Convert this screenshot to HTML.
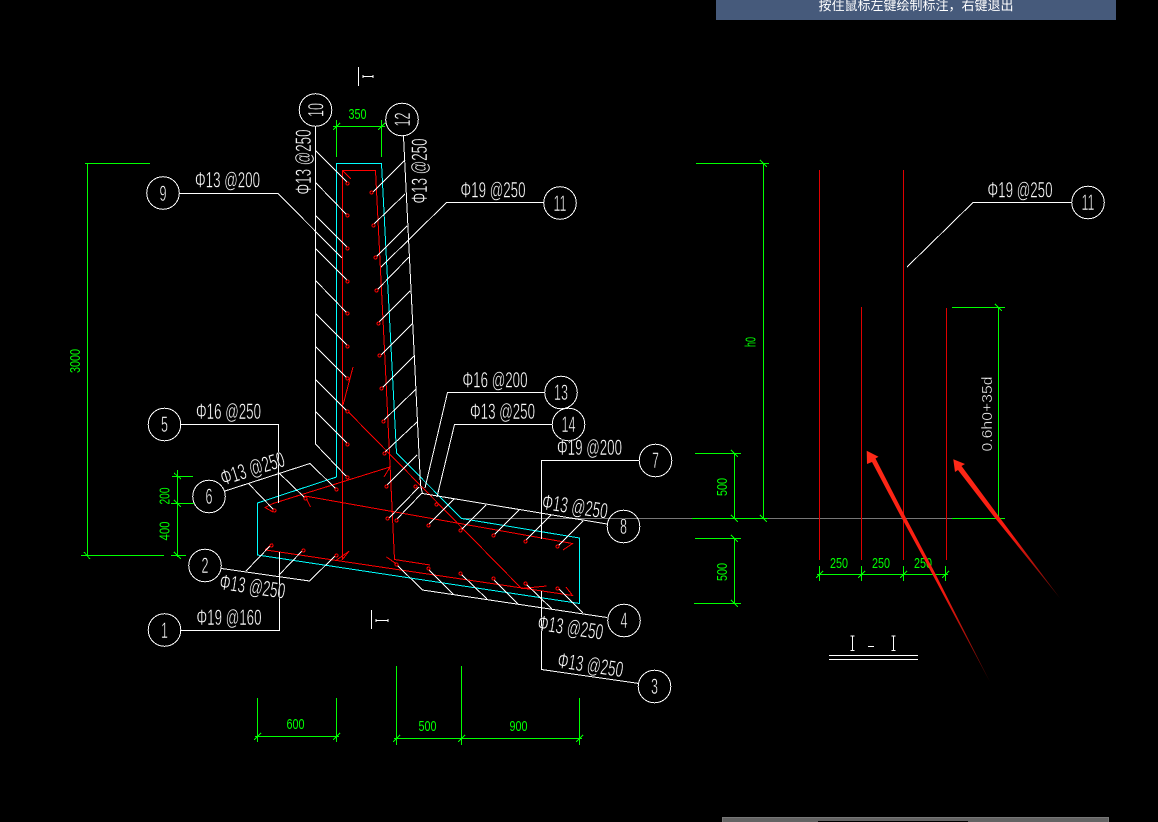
<!DOCTYPE html>
<html><head><meta charset="utf-8"><style>
html,body{margin:0;padding:0;background:#000;width:1158px;height:822px;overflow:hidden}
svg{position:absolute;left:0;top:0}
#b{position:absolute;left:716px;top:0;width:400px;height:20px;background:#465a7b;color:#fff;font:13px/13px "WenQuanYi Zen Hei","Noto Sans CJK SC",sans-serif;text-align:center}
#b span{position:relative;top:-2px}
#s{position:absolute;left:722px;top:817px;width:387px;height:5px;background:#636363;box-sizing:border-box;border:1px solid #777;border-bottom:0}
#k{position:absolute;left:818px;top:821px;width:150px;height:1px;background:#000}
.l{fill:none;shape-rendering:crispEdges;stroke-width:1}
.w{stroke:#fff}.g{stroke:#00ff00}.r{stroke:#ff0000}.c{stroke:#00ffff}
.d{fill:#000;stroke:#ff0000;stroke-width:1;shape-rendering:crispEdges}
text{font-family:"Liberation Sans",sans-serif;text-anchor:middle}
.t{fill:#fff;font-size:22px;stroke:#000;stroke-width:.45px}
.n{fill:#fff;font-size:22px;stroke:#000;stroke-width:.5px}
.m{fill:#00ff00;font-size:15px}
</style></head><body>
<svg width="1158" height="822" viewBox="0 0 1158 822">
<defs>
<linearGradient id="a1" gradientUnits="userSpaceOnUse" x1="867" y1="451" x2="990" y2="682"><stop offset="0" stop-color="#ff2a18"/><stop offset=".6" stop-color="#f5190f"/><stop offset="1" stop-color="#5a0804"/></linearGradient>
<linearGradient id="a2" gradientUnits="userSpaceOnUse" x1="953" y1="459" x2="1060" y2="598"><stop offset="0" stop-color="#ff2a18"/><stop offset=".55" stop-color="#f5190f"/><stop offset="1" stop-color="#5a0804"/></linearGradient>
</defs>

<!-- gray datum -->
<path class="l" stroke="#777" d="M462 518.5H692M766 518.5H952"/>

<!-- cyan outline -->
<path class="l c" d="M336.5 477V163.5H381.5L396.5 453L461.5 518.5L579.5 538V603.5L257.5 555V503L336.5 477"/>

<!-- red bars wall -->
<path class="l r" d="M342.5 560V170.5H375.5L385.5 370L394.5 559.5L430 565"/>
<path class="l r" d="M342.5 170.5L351 179M343 405L353 367M266 550L572.5 595.5L566 587M265 550L272.5 543.5"/>
<path class="l r" d="M273 503.5L390 467L384 477M273 503.5L265 507.5L273 512"/>
<path class="l r" d="M305 496L572.5 543.5L563 550M305 496L310.5 507"/>
<path class="l r" d="M347 410.5L521.5 588.5L546.5 586M336.5 560L348 552M342 560L349 551M386.5 557L396.5 564"/>

<!-- white outer -->
<path class="l w" d="M315.5 126V444L346 476"/>
<path class="l w" d="M403.5 136L404.5 157L415 370L420.5 485L422.5 493.5L607 524"/>
<path class="l w" d="M396 564L422.5 590L607 617.5"/>

<!-- left hatches -->
<path class="l w" d="M316 151L348 183M316 183L348 216M316 216L348 248M316 249L348 281M316 281L348 314M316 314L348 346M316 347L348 379M316 380L347 411M316 412L348 444"/>
<!-- right hatches -->
<path class="l w" d="M372 193L405 160M373 225L405 194M375 258L407 226M377 290L409 257M378 323L410 291M380 356L412 324M382 388L414 356M383 421L416 389M384 453L417 422M386 486L417 455M388 519L419 487M396 520L422 493"/>
<!-- base hatches top -->
<path class="l w" d="M428 525L454 499M461 530L486 505M493 536L519 510M525 541L551 515M558 546L583 521"/>
<!-- base hatches bottom -->
<path class="l w" d="M428 569L454 595M461 574L487 599M493 579L519 605M525 583L552 609M558 588L583 613"/>
<!-- left toe hatches -->
<path class="l w" d="M248 483L274 510M278 472L305 498M246 571L271 545M279 575L303 550"/>

<!-- leaders -->
<path class="l w" d="M179 193.5H278L342 258M446.5 202.5H544M446.5 202.5L381 267"/>
<path class="l w" d="M180 424.5H278.5V503M225 491L310 463.5L336 489M221.5 568.5L309.5 581L336 555M180 630.5H279.5V552"/>
<path class="l w" d="M545 392.5H447.5L425 488M552 424.5H454.5L437 497M639 460.5H541.5V539M639 683.5L541.5 669.5V591"/>
<path class="l w" d="M973 202.5H1071M973 202.5L907 267"/>

<!-- rebar dots -->
<g class="d">
<circle cx="347.5" cy="183.5" r="1.5"/><circle cx="347.5" cy="215.5" r="1.5"/><circle cx="347.5" cy="248.5" r="1.5"/><circle cx="347.5" cy="281.5" r="1.5"/><circle cx="347.5" cy="313.5" r="1.5"/><circle cx="347.5" cy="346.5" r="1.5"/><circle cx="347.5" cy="378.5" r="1.5"/><circle cx="347.5" cy="411.5" r="1.5"/><circle cx="347.5" cy="444.5" r="1.5"/><circle cx="347.5" cy="477.5" r="1.5"/>
<circle cx="371.5" cy="192.5" r="1.5"/><circle cx="373.5" cy="225.5" r="1.5"/><circle cx="375.5" cy="257.5" r="1.5"/><circle cx="376.5" cy="290.5" r="1.5"/><circle cx="378.5" cy="323.5" r="1.5"/><circle cx="379.5" cy="355.5" r="1.5"/><circle cx="381.5" cy="388.5" r="1.5"/><circle cx="383.5" cy="421.5" r="1.5"/><circle cx="384.5" cy="453.5" r="1.5"/><circle cx="386.5" cy="486.5" r="1.5"/><circle cx="387.5" cy="518.5" r="1.5"/><circle cx="396.5" cy="520.5" r="1.5"/>
<circle cx="415.5" cy="486.5" r="1.5"/><circle cx="436.5" cy="504.5" r="1.5"/>
<circle cx="428.5" cy="525.5" r="1.5"/><circle cx="460.5" cy="530.5" r="1.5"/><circle cx="493.5" cy="535.5" r="1.5"/><circle cx="525.5" cy="541.5" r="1.5"/><circle cx="557.5" cy="546.5" r="1.5"/>
<circle cx="396.5" cy="564.5" r="1.5"/><circle cx="428.5" cy="568.5" r="1.5"/><circle cx="460.5" cy="573.5" r="1.5"/><circle cx="493.5" cy="578.5" r="1.5"/><circle cx="525.5" cy="583.5" r="1.5"/><circle cx="557.5" cy="588.5" r="1.5"/>
<circle cx="274.5" cy="510.5" r="1.5"/><circle cx="305.5" cy="498.5" r="1.5"/><circle cx="336.5" cy="489.5" r="1.5"/>
<circle cx="271.5" cy="545.5" r="1.5"/><circle cx="303.5" cy="550.5" r="1.5"/><circle cx="336.5" cy="555.5" r="1.5"/>
</g>

<!-- circles -->
<g class="l w">
<circle cx="315.5" cy="110" r="16.3"/><circle cx="402" cy="119.5" r="16.3"/><circle cx="163" cy="193" r="16.3"/><circle cx="560" cy="203" r="16.3"/>
<circle cx="164.5" cy="424.5" r="16.3"/><circle cx="209" cy="496.5" r="16.3"/><circle cx="205" cy="565.5" r="16.3"/><circle cx="164.5" cy="630" r="16.3"/>
<circle cx="561" cy="392.5" r="16.3"/><circle cx="568.5" cy="424.5" r="16.3"/><circle cx="655.5" cy="460.5" r="16.3"/><circle cx="623.5" cy="526.5" r="16.3"/><circle cx="624" cy="620.5" r="16.3"/><circle cx="654.5" cy="686.5" r="16.3"/><circle cx="1088" cy="202.5" r="16.3"/>
</g>

<!-- green dims -->
<path class="l g" d="M85 163.5H150M87.5 163.5V555.5M81 555.5H164M177.5 470V557M172 476.5H193M171 503.5H194M171 555.5H186"/>
<path class="l g" d="M336.5 120V157M381.5 120V157M333 126.5H385"/>
<path class="l g" d="M257.5 698V742M336.5 698V742M255 736.5H339M396.5 666V745M461.5 666V745M579.5 698V745M394 738.5H582"/>
<path class="l g" d="M696 163.5H769M763.5 163.5V518.5M952 307.5H1005M998.5 307.5V518.5M952 518.5H1005"/>
<path class="l g" d="M695 453.5H741M734.5 453.5V518.5M692 518.5H768M695 538.5H741M734.5 538.5V603.5M694 603.5H741"/>
<path class="l g" d="M819.5 566V581M861.5 566V581M903.5 566V581M945.5 566V581M817 574.5H948"/>
<path class="l g" d="M84 552L90 559M174 473L181 479M174 500L181 507M174 552L181 559M333 130L340 123M378 130L385 123M254 740L261 733M333 740L340 733M393 742L400 735M458 742L465 735M576 742L583 735M760 160L767 167M995 304L1002 311M731 450L738 457M731 515L738 522M760 515L767 522M731 535L738 542M731 600L738 607M816 578L823 571M858 578L865 571M900 578L907 571M942 578L949 571M995 515L1002 522"/>

<!-- section marks -->
<path class="l w" d="M358.5 67V86M363 76.5H373M363 75V78M373 75V78M371.5 610V629M376 620.5H388M376 619V622M388 619V622"/>
<path class="l w" d="M852.5 636V651M850.5 636H854.5M850.5 650.5H854.5M893.5 636V651M891.5 636H895.5M891.5 650.5H895.5M868 646.5H874M829 655.5H918M829 659.5H918"/>

<!-- white labels -->
<g class="t">
<text transform="translate(227.5,180)" y="7.5" textLength="65" lengthAdjust="spacingAndGlyphs">Φ13 @200</text>
<text transform="translate(303.5,162) rotate(-90)" y="7.5" textLength="65" lengthAdjust="spacingAndGlyphs">Φ13 @250</text>
<text transform="translate(419.5,171) rotate(-90)" y="7.5" textLength="65" lengthAdjust="spacingAndGlyphs">Φ13 @250</text>
<text transform="translate(493,190)" y="7.5" textLength="65" lengthAdjust="spacingAndGlyphs">Φ19 @250</text>
<text transform="translate(228.5,411.5)" y="7.5" textLength="65" lengthAdjust="spacingAndGlyphs">Φ16 @250</text>
<text transform="translate(252.5,468.5) rotate(-17.5)" y="7.5" textLength="66" lengthAdjust="spacingAndGlyphs">Φ13 @250</text>
<text transform="translate(252.5,586.5) rotate(8.5)" y="7.5" textLength="66" lengthAdjust="spacingAndGlyphs">Φ13 @250</text>
<text transform="translate(229,617.5)" y="7.5" textLength="65" lengthAdjust="spacingAndGlyphs">Φ19 @160</text>
<text transform="translate(495,380)" y="7.5" textLength="65" lengthAdjust="spacingAndGlyphs">Φ16 @200</text>
<text transform="translate(502.5,411.5)" y="7.5" textLength="65" lengthAdjust="spacingAndGlyphs">Φ13 @250</text>
<text transform="translate(589.5,447.5)" y="7.5" textLength="65" lengthAdjust="spacingAndGlyphs">Φ19 @200</text>
<text transform="translate(575,506.5) rotate(8.5)" y="7.5" textLength="66" lengthAdjust="spacingAndGlyphs">Φ13 @250</text>
<text transform="translate(570.5,627.5) rotate(8.5)" y="7.5" textLength="66" lengthAdjust="spacingAndGlyphs">Φ13 @250</text>
<text transform="translate(590.5,665) rotate(8.5)" y="7.5" textLength="66" lengthAdjust="spacingAndGlyphs">Φ13 @250</text>
<text transform="translate(1020,190)" y="7.5" textLength="65" lengthAdjust="spacingAndGlyphs">Φ19 @250</text>
</g>
<g class="n">
<text transform="translate(315.5,110) rotate(-90)" y="8" textLength="14" lengthAdjust="spacingAndGlyphs">10</text>
<text transform="translate(402,119.5) rotate(-90)" y="8" textLength="14" lengthAdjust="spacingAndGlyphs">12</text>
<text x="163" y="201" textLength="7" lengthAdjust="spacingAndGlyphs">9</text>
<text x="560" y="211" textLength="13" lengthAdjust="spacingAndGlyphs">11</text>
<text x="164.5" y="432" textLength="7" lengthAdjust="spacingAndGlyphs">5</text>
<text x="209" y="504" textLength="7" lengthAdjust="spacingAndGlyphs">6</text>
<text x="205" y="573" textLength="7" lengthAdjust="spacingAndGlyphs">2</text>
<text x="164.5" y="638" textLength="7" lengthAdjust="spacingAndGlyphs">1</text>
<text x="561" y="400" textLength="14" lengthAdjust="spacingAndGlyphs">13</text>
<text x="568.5" y="432" textLength="14" lengthAdjust="spacingAndGlyphs">14</text>
<text x="655.5" y="468" textLength="7" lengthAdjust="spacingAndGlyphs">7</text>
<text x="623.5" y="534" textLength="7" lengthAdjust="spacingAndGlyphs">8</text>
<text x="624" y="628" textLength="7" lengthAdjust="spacingAndGlyphs">4</text>
<text x="654.5" y="694" textLength="7" lengthAdjust="spacingAndGlyphs">3</text>
<text x="1088" y="210" textLength="13" lengthAdjust="spacingAndGlyphs">11</text>
</g>
<text class="n" style="font-size:15px;stroke-width:.4px" transform="translate(987,414) rotate(-90)" y="5" textLength="75" lengthAdjust="spacingAndGlyphs">0.6h0+35d</text>

<!-- green labels -->
<g class="m">
<text x="357.5" y="119" textLength="18" lengthAdjust="spacingAndGlyphs">350</text>
<text x="295.5" y="729" textLength="18" lengthAdjust="spacingAndGlyphs">600</text>
<text x="427.5" y="731" textLength="18" lengthAdjust="spacingAndGlyphs">500</text>
<text x="518.5" y="731" textLength="18" lengthAdjust="spacingAndGlyphs">900</text>
<text x="839" y="568" textLength="18" lengthAdjust="spacingAndGlyphs">250</text>
<text x="881" y="568" textLength="18" lengthAdjust="spacingAndGlyphs">250</text>
<text x="923" y="568" textLength="18" lengthAdjust="spacingAndGlyphs">250</text>
<text transform="translate(74.5,361) rotate(-90)" y="5.5" textLength="24" lengthAdjust="spacingAndGlyphs">3000</text>
<text transform="translate(164,496) rotate(-90)" y="5.5" textLength="17" lengthAdjust="spacingAndGlyphs">200</text>
<text transform="translate(164,531) rotate(-90)" y="5.5" textLength="19" lengthAdjust="spacingAndGlyphs">400</text>
<text transform="translate(750,342) rotate(-90)" y="5.5" textLength="10" lengthAdjust="spacingAndGlyphs">h0</text>
<text transform="translate(721.5,487) rotate(-90)" y="5.5" textLength="18" lengthAdjust="spacingAndGlyphs">500</text>
<text transform="translate(721.5,572) rotate(-90)" y="5.5" textLength="18" lengthAdjust="spacingAndGlyphs">500</text>
</g>

<!-- red vertical bars section -->
<path class="l" stroke="#e00000" d="M819.5 170V560M861.5 307V560M903.5 170V560M946.5 308V560"/>

<!-- arrows -->
<polygon fill="url(#a1)" points="866.7,450.7 878.5,456.7 875.5,458.5 906,518 935,573 990,682 931.7,573 901.7,518 872,462 867,464"/>
<polygon fill="url(#a2)" points="953.3,459.3 965,464 961.5,466 1000,518 1060,598.3 995,518 958,470 955,472"/>
</svg>
<div id="b"><span>按住鼠标左键绘制标注，右键退出</span></div>
<div id="s"></div><div id="k"></div>
</body></html>
